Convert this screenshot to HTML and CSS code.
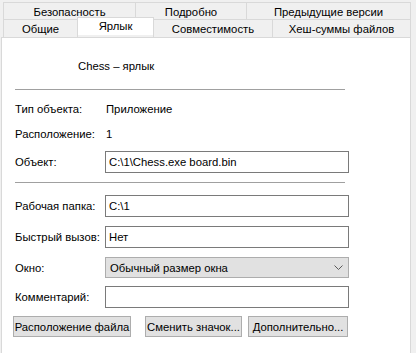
FILE: index.html
```html
<!DOCTYPE html>
<html lang="ru">
<head>
<meta charset="utf-8">
<title>Свойства: Chess – ярлык</title>
<link rel="stylesheet" href="styles.css">
</head>
<body>
<div class="tabstrip">
  <div class="tabrow top">
    <div class="tab t-sec">Безопасность</div>
    <div class="tab t-det">Подробно</div>
    <div class="tab t-prev">Предыдущие версии</div>
  </div>
  <div class="tabrow bottom">
    <div class="tab t-gen">Общие</div>
    <div class="tab t-lnk selected">Ярлык</div>
    <div class="tab t-cmp">Совместимость</div>
    <div class="tab t-hash">Хеш-суммы файлов</div>
  </div>
</div>
<div class="panel">
  <div class="header">
    <div class="icon"></div>
    <div class="name">Chess – ярлык</div>
  </div>
  <div class="sep sep1"></div>
  <div class="row text r-type"><span class="label">Тип объекта:</span><span class="value">Приложение</span></div>
  <div class="row text r-loc"><span class="label">Расположение:</span><span class="value">1</span></div>
  <div class="row field r-obj"><span class="label">Объект:</span><div class="input">C:\1\Chess.exe board.bin</div></div>
  <div class="sep sep2"></div>
  <div class="row field r-dir"><span class="label">Рабочая папка:</span><div class="input">C:\1</div></div>
  <div class="row field r-key"><span class="label">Быстрый вызов:</span><div class="input">Нет</div></div>
  <div class="row field r-win"><span class="label">Окно:</span><div class="select"><span>Обычный размер окна</span><svg class="chev" width="9" height="5" viewBox="0 0 9 5"><path d="M0.5 0.5 L4.5 4.5 L8.5 0.5" fill="none" stroke="#5a5a5a" stroke-width="1"/></svg></div></div>
  <div class="row field r-com"><span class="label">Комментарий:</span><div class="input"></div></div>
  <div class="buttons">
    <div class="btn b1">Расположение файла</div>
    <div class="btn b2">Сменить значок...</div>
    <div class="btn b3">Дополнительно...</div>
  </div>
</div>
</body>
</html>
```
FILE: styles.css
```css
* { box-sizing: border-box; }
html, body { margin: 0; padding: 0; }
body {
  width: 416px;
  height: 353px;
  overflow: hidden;
  background: #f0f0f0;
  font-family: "Liberation Sans", Arial, sans-serif;
  font-size: 11.3px;
  color: #000;
}
.tabstrip { padding: 2px 0 0 3px; }
.tabrow { display: flex; align-items: flex-start; }
.tab {
  margin-right: -1px;
  border: 1px solid #d9d9d9;
  border-bottom: none;
  background: #f0f0f0;
  display: flex;
  align-items: center;
  justify-content: center;
  white-space: nowrap;
}
.tabrow.top .tab { height: 17px; padding-top: 1px; }
.tabrow.bottom .tab { height: 18px; padding-top: 1px; }
.t-sec { width: 133px; }
.t-det { width: 112px; }
.t-prev { width: 165px; }
.t-gen { width: 75px; }
.t-lnk { width: 77px; }
.t-cmp { width: 120px; }
.t-hash { width: 139px; }
.tab.selected {
  position: relative;
  z-index: 1;
  background: #fff;
  height: 21px;
  margin-top: -2px;
  margin-bottom: -1px;
  padding-top: 0;
  padding-bottom: 2px;
}
.panel {
  margin-left: 1px;
  width: 410px;
  height: 330px;
  background: #fff;
  border: 1px solid #d9d9d9;
  padding: 12px 0 0 13px;
}
.header { display: flex; align-items: center; height: 32px; }
.icon { width: 32px; height: 32px; }
.name { margin-left: 31px; }
.sep { width: 330px; height: 1px; background: #a0a0a0; }
.sep1 { margin-top: 7px; }
.row { display: flex; align-items: center; }
.row.text { height: 15px; }
.label { width: 90px; flex: none; white-space: nowrap; }
.value { padding-left: 1px; }
.r-type { margin-top: 11px; }
.r-loc { margin-top: 10px; }
.r-obj { margin-top: 10px; }
.input {
  width: 244px;
  height: 22px;
  border: 1px solid #7a7a7a;
  background: #fff;
  padding: 0 3px;
  display: flex;
  align-items: center;
  white-space: nowrap;
}
.sep2 { margin-top: 9px; }
.r-dir { margin-top: 12px; }
.r-key { margin-top: 9px; }
.r-win { margin-top: 9px; }
.select {
  width: 244px;
  height: 21px;
  border: 1px solid #adadad;
  background: #e1e1e1;
  padding: 0 5px 0 4px;
  display: flex;
  align-items: center;
  justify-content: space-between;
}
.r-com { margin-top: 8px; }
.buttons { display: flex; margin-top: 8px; margin-left: -2px; }
.btn {
  height: 21px;
  border: 1px solid #adadad;
  background: #e1e1e1;
  display: flex;
  align-items: center;
  justify-content: center;
  white-space: nowrap;
}
.b1 { width: 118px; }
.b2 { width: 97px; margin-left: 14px; }
.b3 { width: 100px; margin-left: 6px; }
```
